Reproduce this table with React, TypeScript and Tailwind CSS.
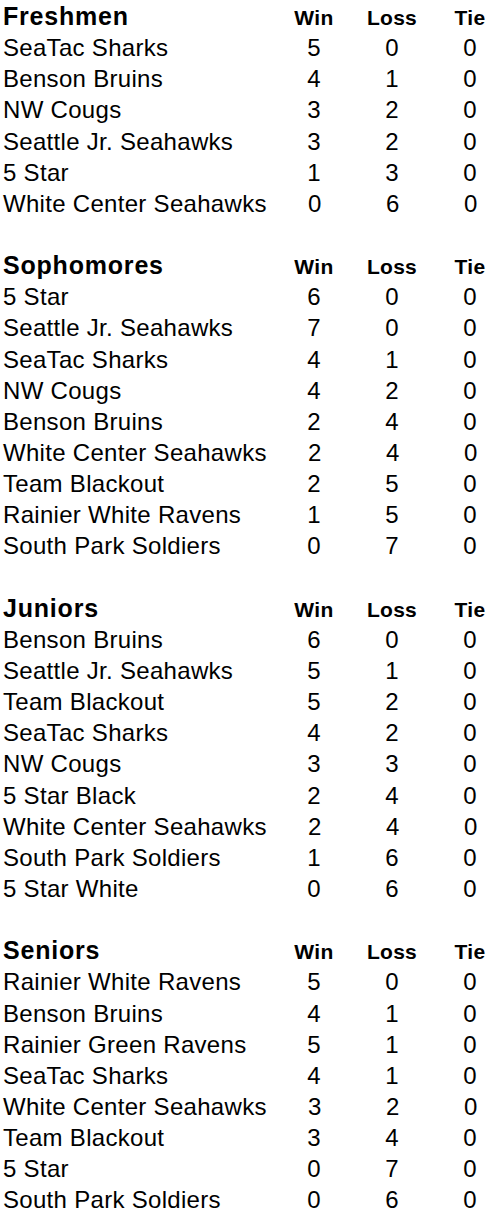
import React from "react";

type Row = [string, number, number, number];
type Section = { title: string; rows: Row[] };

const sections: Section[] = [
  {
    title: "Freshmen",
    rows: [
      ["SeaTac Sharks", 5, 0, 0],
      ["Benson Bruins", 4, 1, 0],
      ["NW Cougs", 3, 2, 0],
      ["Seattle Jr. Seahawks", 3, 2, 0],
      ["5 Star", 1, 3, 0],
      ["White Center Seahawks", 0, 6, 0],
    ],
  },
  {
    title: "Sophomores",
    rows: [
      ["5 Star", 6, 0, 0],
      ["Seattle Jr. Seahawks", 7, 0, 0],
      ["SeaTac Sharks", 4, 1, 0],
      ["NW Cougs", 4, 2, 0],
      ["Benson Bruins", 2, 4, 0],
      ["White Center Seahawks", 2, 4, 0],
      ["Team Blackout", 2, 5, 0],
      ["Rainier White Ravens", 1, 5, 0],
      ["South Park Soldiers", 0, 7, 0],
    ],
  },
  {
    title: "Juniors",
    rows: [
      ["Benson Bruins", 6, 0, 0],
      ["Seattle Jr. Seahawks", 5, 1, 0],
      ["Team Blackout", 5, 2, 0],
      ["SeaTac Sharks", 4, 2, 0],
      ["NW Cougs", 3, 3, 0],
      ["5 Star Black", 2, 4, 0],
      ["White Center Seahawks", 2, 4, 0],
      ["South Park Soldiers", 1, 6, 0],
      ["5 Star White", 0, 6, 0],
    ],
  },
  {
    title: "Seniors",
    rows: [
      ["Rainier White Ravens", 5, 0, 0],
      ["Benson Bruins", 4, 1, 0],
      ["Rainier Green Ravens", 5, 1, 0],
      ["SeaTac Sharks", 4, 1, 0],
      ["White Center Seahawks", 3, 2, 0],
      ["Team Blackout", 3, 4, 0],
      ["5 Star", 0, 7, 0],
      ["South Park Soldiers", 0, 6, 0],
    ],
  },
];

const grid =
  "grid grid-cols-[1fr_60px_60px_60px] gap-x-[18px] h-[31.15px] leading-[31.15px] items-baseline";

export default function App() {
  return (
    <div
      className="w-[500px] min-h-[1218px] bg-white text-black pl-[3px] pt-[1px]"
      style={{ fontFamily: '"Liberation Sans", Arial, sans-serif' }}
    >
      {sections.map((s, si) => (
        <div key={s.title} className={si > 0 ? "pt-[31.15px]" : ""}>
          <div className={grid}>
            <div className="text-[25px] font-bold tracking-[0.8px] whitespace-nowrap">
              {s.title}
            </div>
            <div className="text-[21px] font-bold tracking-[0.4px] text-center">Win</div>
            <div className="text-[21px] font-bold tracking-[0.2px] text-center">Loss</div>
            <div className="text-[21px] font-bold tracking-[0.4px] text-center">Tie</div>
          </div>
          {s.rows.map((r, i) => (
            <div key={i} className={grid}>
              <div className="text-[24px] tracking-[0.3px] whitespace-nowrap">{r[0]}</div>
              <div className="text-[24px] text-center">{r[1]}</div>
              <div className="text-[24px] text-center">{r[2]}</div>
              <div className="text-[24px] text-center">{r[3]}</div>
            </div>
          ))}
        </div>
      ))}
    </div>
  );
}
